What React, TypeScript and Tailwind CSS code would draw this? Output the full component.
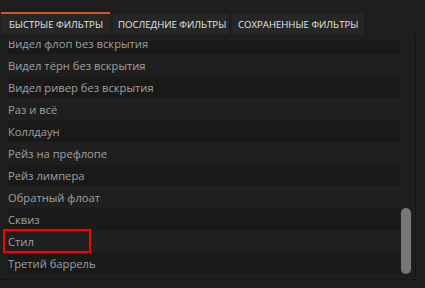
import React from "react";

const items = [
  "Видел флоп без вскрытия",
  "Видел тёрн без вскрытия",
  "Видел ривер без вскрытия",
  "Раз и всё",
  "Коллдаун",
  "Рейз на префлопе",
  "Рейз лимпера",
  "Обратный флоат",
  "Сквиз",
  "Стил",
  "Третий баррель",
];

export default function App() {
  return (
    <div
      className="w-[425px] h-[288px] bg-[#1e1e1e] overflow-hidden"
      style={{ fontFamily: '"Open Sans", "Noto Sans", sans-serif' }}
    >
      <div className="flex items-end gap-[3px] pt-[12px] pl-[1px]">
        <div className="h-[22px] w-[109px] border-t-2 border-[#cc5a1e] bg-[#262626] flex items-center pt-[3px] pl-[8px] text-[9.6px] text-[#e8e8e8] whitespace-nowrap">
          БЫСТРЫЕ ФИЛЬТРЫ
        </div>
        <div className="h-[20px] w-[116px] bg-[#262626] flex items-center pt-[2px] pl-[5px] text-[9.6px] text-[#e8e8e8] whitespace-nowrap">
          ПОСЛЕДНИЕ ФИЛЬТРЫ
        </div>
        <div className="h-[20px] w-[132px] bg-[#262626] flex items-center pt-[2px] pl-[6px] text-[9.6px] text-[#e8e8e8] whitespace-nowrap">
          СОХРАНЕННЫЕ ФИЛЬТРЫ
        </div>
      </div>

      <div className="relative w-[416px] h-[246px] border-r border-b border-[#141414] flex pt-[7px] pl-[8px]">
        <div className="w-[392px] h-[234px] overflow-hidden">
          <div className="mt-[-9px]">
            {items.map((t, i) => (
              <div
                key={t}
                className={
                  "h-[22px] flex items-center pt-[2px] text-[11.2px] text-[#a0a0a0] whitespace-nowrap " +
                  (i % 2 === 0 ? "bg-[#191919]" : "bg-[#1f1f1f]")
                }
              >
                {t}
              </div>
            ))}
          </div>
        </div>
        <div className="w-[12px] flex flex-col justify-end pl-[1px] pb-[5px]">
          <div className="w-[10px] h-[66px] rounded-full bg-[#777777]" />
        </div>
        <div className="absolute z-10 left-[3px] top-[195px] w-[88px] h-[24px] border-2 border-[#ff0000]" />
      </div>
    </div>
  );
}
